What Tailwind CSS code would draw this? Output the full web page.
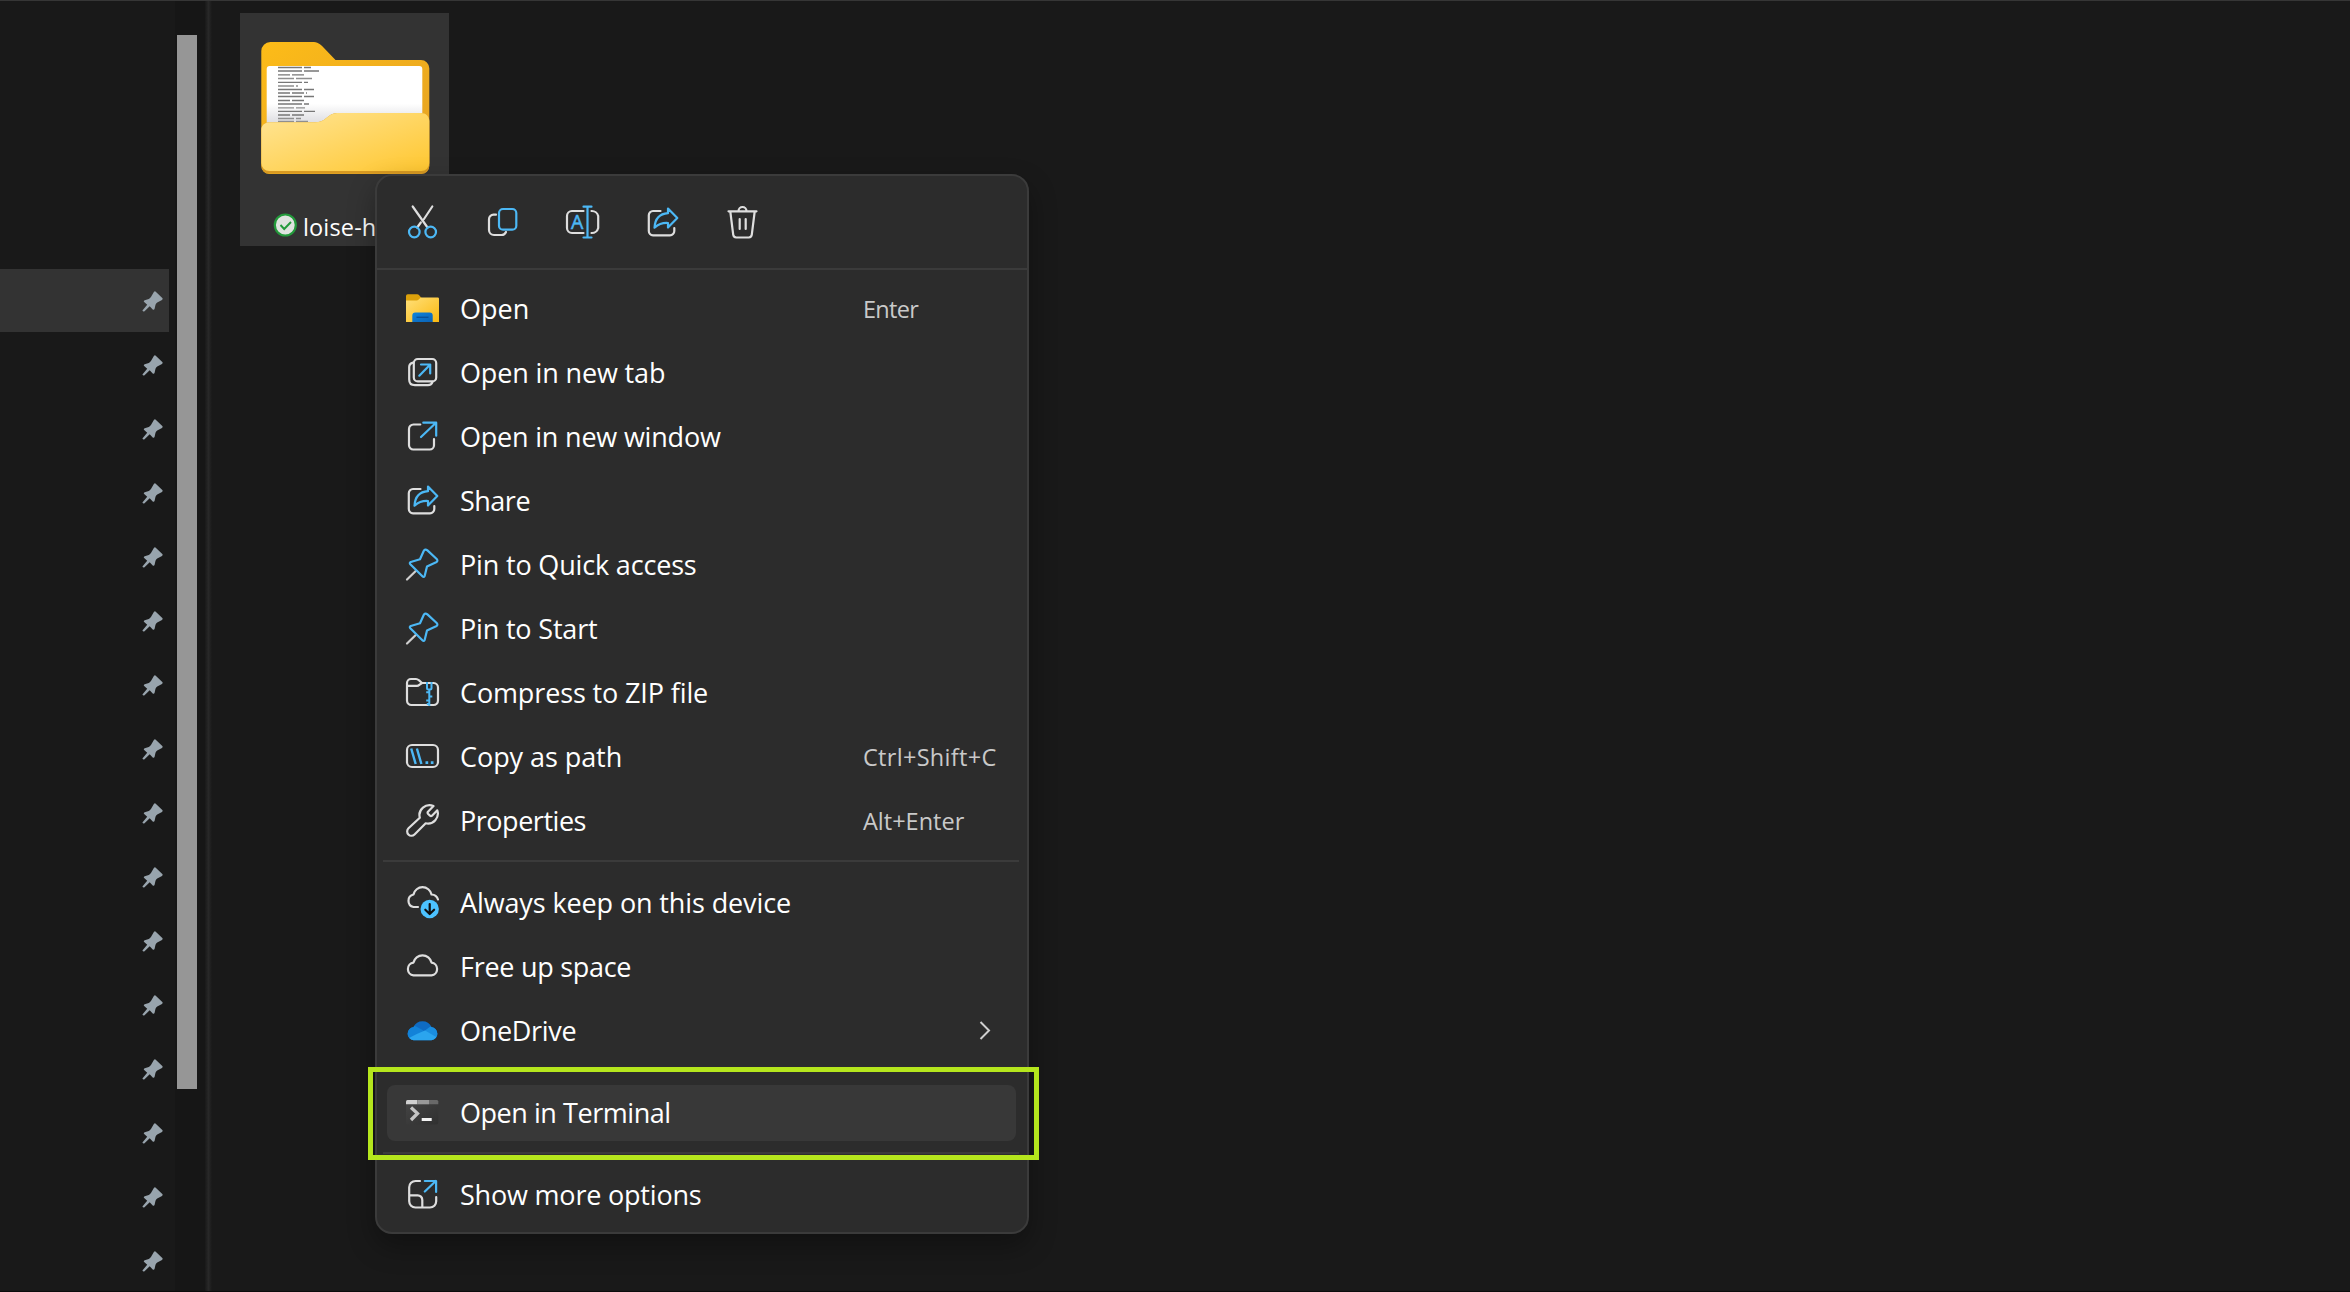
<!DOCTYPE html>
<html lang="en">
<head>
<meta charset="utf-8">
<title>File Explorer</title>
<script src="https://cdn.jsdelivr.net/npm/@tailwindcss/browser@4"></script>
</head>
<body class="h-[1292px] w-[2350px] overflow-hidden bg-[#191919] font-['Open_Sans',sans-serif] text-white">

<!-- Shared icon shapes -->
<svg class="hidden">
  <symbol id="pushpin" viewBox="0 0 22 22">
    <path d="M12 .8q1-.9 2 .1l6.300 6q.9 1.200-.3 2.100l-4.800 2.500q-1.200.8-1.700 2.300l-.9 4q-.6 1.600-1.900.600l-3-3.100-5.200 5q-1.300.7-2.100-.7l4.800-5.800-3-2.800q-1-1.100.500-1.700l4.100-1.400q1.400-.5 2.300-2.100z" fill="#98a4ad"/>
  </symbol>
  <symbol id="share" viewBox="0 0 36 36">
    <path d="M16.500 6H9a4.200 4.200 0 0 0-4.200 4.200V26A4.300 4.300 0 0 0 9 30.300h17a4.300 4.300 0 0 0 4.300-4.300v-3" stroke="#dedede"/>
    <path d="M24 3.500 33.300 13 24 22.500V18c-5.500-.4-9.500 1.200-13.500 4.700C11 14 16 8.800 24 8.200z" stroke="#4cb8f5"/>
  </symbol>
  <symbol id="pin" viewBox="0 0 36 36">
    <path d="M12 23.700 3 32.500" stroke="#cfcfcf"/>
    <path d="M16 12.200 19.700 4q1.400-2.500 3.700-.6l9.300 8.600q1.700 2-.6 3.300L23 19.600l-2.300 9.200q-.8 2-2.300.5L6.300 17.200q-1.200-1.400.5-2.200z" stroke="#4cb8f5"/>
  </symbol>
</svg>

<div class="flex h-full flex-col border-t border-[#363636]">
  <div class="flex min-h-0 flex-1">

    <!-- Navigation pane -->
    <nav class="flex w-[175px] shrink-0 flex-col pt-[235px]">
      <div class="mb-[33px] h-0.5 w-[155px] bg-[#353535]"></div>
      <div class="flex w-[169px] flex-col">
        <div class="flex h-[63px] items-center justify-end bg-[#333333] pt-[2px] pr-[5px]"><svg class="size-[22px]"><use href="#pushpin"/></svg></div>
        <div class="flex h-16 items-center justify-end pt-[3px] pr-[5px]"><svg class="size-[22px]"><use href="#pushpin"/></svg></div>
        <div class="flex h-16 items-center justify-end pt-[3px] pr-[5px]"><svg class="size-[22px]"><use href="#pushpin"/></svg></div>
        <div class="flex h-16 items-center justify-end pt-[3px] pr-[5px]"><svg class="size-[22px]"><use href="#pushpin"/></svg></div>
        <div class="flex h-16 items-center justify-end pt-[3px] pr-[5px]"><svg class="size-[22px]"><use href="#pushpin"/></svg></div>
        <div class="flex h-16 items-center justify-end pt-[3px] pr-[5px]"><svg class="size-[22px]"><use href="#pushpin"/></svg></div>
        <div class="flex h-16 items-center justify-end pt-[3px] pr-[5px]"><svg class="size-[22px]"><use href="#pushpin"/></svg></div>
        <div class="flex h-16 items-center justify-end pt-[3px] pr-[5px]"><svg class="size-[22px]"><use href="#pushpin"/></svg></div>
        <div class="flex h-16 items-center justify-end pt-[3px] pr-[5px]"><svg class="size-[22px]"><use href="#pushpin"/></svg></div>
        <div class="flex h-16 items-center justify-end pt-[3px] pr-[5px]"><svg class="size-[22px]"><use href="#pushpin"/></svg></div>
        <div class="flex h-16 items-center justify-end pt-[3px] pr-[5px]"><svg class="size-[22px]"><use href="#pushpin"/></svg></div>
        <div class="flex h-16 items-center justify-end pt-[3px] pr-[5px]"><svg class="size-[22px]"><use href="#pushpin"/></svg></div>
        <div class="flex h-16 items-center justify-end pt-[3px] pr-[5px]"><svg class="size-[22px]"><use href="#pushpin"/></svg></div>
        <div class="flex h-16 items-center justify-end pt-[3px] pr-[5px]"><svg class="size-[22px]"><use href="#pushpin"/></svg></div>
        <div class="flex h-16 items-center justify-end pt-[3px] pr-[5px]"><svg class="size-[22px]"><use href="#pushpin"/></svg></div>
        <div class="flex h-16 items-center justify-end pt-[3px] pr-[5px]"><svg class="size-[22px]"><use href="#pushpin"/></svg></div>
      </div>
    </nav>

    <!-- Scrollbar -->
    <div class="w-[30px] shrink-0 bg-[#161616] pt-[34px] pl-[2px]">
      <div class="h-[1054px] w-5 bg-[#969696]"></div>
    </div>
    <div class="w-[7px] shrink-0 bg-linear-to-r from-[#191919] via-[#282828] to-[#191919]"></div>

    <!-- File area -->
    <main class="flex-1 pt-[12px] pl-[28px]">
      <div class="flex h-[233px] w-[209px] flex-col bg-[#333333]">
        <svg class="mt-[23px] ml-[15px] h-[144px] w-[180px] shrink-0" viewBox="0 0 180 144">
          <defs>
            <linearGradient id="back" x1="0" y1="0" x2="1" y2="1"><stop offset="0" stop-color="#fdbc18"/><stop offset="1" stop-color="#e3a024"/></linearGradient>
            <linearGradient id="front" x1="0" y1="0" x2="1" y2="1"><stop offset="0" stop-color="#ffe596"/><stop offset="1" stop-color="#ffc730"/></linearGradient>
            <linearGradient id="paper" x1="0" y1="0" x2="0" y2="1"><stop offset=".65" stop-color="#fff"/><stop offset="1" stop-color="#dcdce0"/></linearGradient>
          </defs>
          <path d="M6.300 15a9 9 0 0 1 9-9H57c5.500 0 8.500 2 11.500 5.500L80.500 24H166a8.300 8.300 0 0 1 8.300 8.300V130a8 8 0 0 1-8 8h-152a8 8 0 0 1-8-8z" fill="url(#back)"/>
          <path d="M11.700 33a3 3 0 0 1 3-3h149.600a3 3 0 0 1 3 3v55H11.700z" fill="url(#paper)"/>
          <g stroke="#777" stroke-width="1.300">
            <path d="M23 31.500h33M23 35h41M23 46.300h30M23 53.500h36M23 60.500h36M23 68h31M23 75.300h37" stroke-dasharray="24 2 15 1"/>
            <path d="M23 38.800h27M23 57h29M23 64.500h26M23 79h27" stroke-dasharray="12 2"/>
            <path d="M23 42.500h34M23 50h20M23 71.800h27M23 82.500h23M23 85.500h30" stroke-dasharray="16 2" stroke="#8f8f8f"/>
          </g>
          <path d="M6.300 94c0-4 3-7.700 8-7.700H60c5 0 8-1.500 11-4 3.500-3 6.500-5.300 11-5.300h84c5 0 8.300 3.500 8.300 8v44.500a8 8 0 0 1-8 8h-152a8 8 0 0 1-8-8z" fill="#d89a22"/>
          <path d="M6.300 94c0-4 3-7.700 8-7.700H60c5 0 8-1.500 11-4 3.500-3 6.500-5.300 11-5.300h84c5 0 8.300 3.500 8.300 8v42a8 8 0 0 1-8 8h-152a8 8 0 0 1-8-8z" fill="url(#front)"/>
        </svg>
        <div class="mt-[27px] ml-[33px] flex items-center">
          <svg class="size-6" viewBox="0 0 24 24"><circle cx="12.300" cy="12" r="10.500" fill="#dfe3df" stroke="#239a3b" stroke-width="2.200"/><path d="m7.500 12 3.700 4 6.800-7" fill="none" stroke="#239a3b" stroke-width="1.900"/></svg>
          <span class="mt-1 ml-[6px] text-[23.500px] leading-8 tracking-[0.15px] whitespace-nowrap">loise-h</span>
        </div>
      </div>
    </main>
  </div>
  <div class="h-px bg-[#0c0c0c]"></div>
</div>

<!-- Context menu -->
<div class="absolute top-[174px] left-[375px] h-[1060px] w-[654px] rounded-[17px] border-2 border-[#3b3b3b] bg-[#2c2c2c] shadow-[0_12px_28px_rgba(0,0,0,0.32)]">
  <div class="flex h-[92px] items-center gap-11 pl-[27px]">
    <svg class="size-9" viewBox="0 0 36 36" fill="none" stroke-width="2.200" stroke-linecap="round"><path d="m8.700 2.500 14.800 21M28.300 2.500 20 15M16.800 18.500l-3.600 5" stroke="#dedede"/><circle cx="10.300" cy="28" r="5.300" stroke="#4cb8f5"/><circle cx="26.700" cy="28" r="5.300" stroke="#4cb8f5"/></svg>
    <svg class="size-9" viewBox="0 0 36 36" fill="none" stroke-width="2.200" stroke-linecap="round"><path d="M12 10.700H9.500A4.500 4.500 0 0 0 5 15.200V26a5 5 0 0 0 5 5h7.500a5 5 0 0 0 4.500-3" stroke="#dedede"/><rect x="15" y="5" width="17.300" height="20.700" rx="4" stroke="#4cb8f5"/></svg>
    <svg class="size-9" viewBox="0 0 36 36" fill="none" stroke-width="2.200" stroke-linecap="round"><path d="M19.500 7H8a5 5 0 0 0-5 5v12a5 5 0 0 0 5 5h11.500M27.500 7a6.500 6.500 0 0 1 6.700 5v12a6.500 6.500 0 0 1-6.700 5" stroke="#dedede"/><path d="M23.500 3v30.500M19.500 2.700h8M19.500 33.500h8" stroke="#4cb8f5"/><text x="7" y="24.500" textLength="13" font-size="19.500" fill="#4cb8f5" stroke="#4cb8f5" stroke-width=".5">A</text></svg>
    <svg class="size-9 translate-y-px" fill="none" stroke-width="2.200" stroke-linecap="round" stroke-linejoin="round"><use href="#share"/></svg>
    <svg class="size-9" viewBox="0 0 36 36" fill="none" stroke="#dedede" stroke-width="2.200" stroke-linecap="round" stroke-linejoin="round"><path d="M4.500 7.300h28M14.500 7a4 4 0 0 1 8 0M6.300 7.500l2.900 23.200a3.200 3.200 0 0 0 3 2.800h12.600a3.200 3.200 0 0 0 3-2.800l2.900-23.200M15.700 15v10M21.700 15v10"/></svg>
  </div>
  <div class="mb-[7px] h-0.5 bg-[#3b3b3b]"></div>

  <ul class="text-[27px] leading-9 whitespace-nowrap">
    <li class="flex h-16 items-center pl-[27px]">
      <svg class="mr-5 size-9" viewBox="0 0 36 36"><defs><linearGradient id="fy" x1="0" y1="0" x2="1" y2="1"><stop offset="0" stop-color="#ffe07a"/><stop offset="1" stop-color="#fbb910"/></linearGradient><linearGradient id="fb" x1="0" y1="0" x2="1" y2="1"><stop offset="0" stop-color="#0f84db"/><stop offset="1" stop-color="#0b62b5"/></linearGradient></defs><path d="M2 5a1.700 1.700 0 0 1 1.700-1.700h9.500q1.200 0 2 1L17.500 7v5H2z" fill="#dca10b"/><path d="M2 9.500h10.500q1.300 0 2.200-.9L16.800 6.500h17q1.200 0 1.200 1.200V31H2z" fill="url(#fy)"/><path d="M8.300 31v-6.500a3 3 0 0 1 3-3h14.400a3 3 0 0 1 3 3V31z" fill="url(#fb)"/><path d="M12.500 26.300h12" stroke="#0a4f96" stroke-width="1.300"/></svg>
      <span class="w-[403px] tracking-[0.05px]">Open</span><span class="text-[23.500px] tracking-[-0.7px] text-[#c9c9c9]">Enter</span>
    </li>
    <li class="flex h-16 items-center pl-[27px]">
      <svg class="mr-5 size-9" viewBox="0 0 36 36" fill="none" stroke-width="2.200" stroke-linecap="round" stroke-linejoin="round"><rect x="9.800" y="4" width="22.400" height="22.400" rx="4" stroke="#dedede"/><path d="M9 7.600Q5.200 8.500 5.200 12v12.500q0 5.700 5.700 5.700H24q3.500 0 4.500-3.300" stroke="#dedede"/><path d="m15.300 20.700 10.700-11M17 9.500h9.200v9" stroke="#4cb8f5"/></svg>
      <span class="tracking-[-0.14px]">Open in new tab</span>
    </li>
    <li class="flex h-16 items-center pl-[27px]">
      <svg class="mr-5 size-9" viewBox="0 0 36 36" fill="none" stroke-width="2.200" stroke-linecap="round" stroke-linejoin="round"><path d="M16.300 5.500H9.500A4.500 4.500 0 0 0 5 10v16.200a4.300 4.300 0 0 0 4.300 4.300h16.400a4.300 4.300 0 0 0 4.300-4.300V20" stroke="#dedede"/><path d="M17 18 32 3.700M19.300 3.700h12.900v13" stroke="#4cb8f5"/></svg>
      <span class="tracking-[-0.2px]">Open in new window</span>
    </li>
    <li class="flex h-16 items-center pl-[27px]">
      <svg class="mr-5 size-9" fill="none" stroke-width="2.200" stroke-linecap="round" stroke-linejoin="round"><use href="#share"/></svg>
      <span class="tracking-[-0.5px]">Share</span>
    </li>
    <li class="flex h-16 items-center pl-[27px]">
      <svg class="mr-5 size-9" fill="none" stroke-width="2.200" stroke-linecap="round" stroke-linejoin="round"><use href="#pin"/></svg>
      <span class="tracking-[-0.17px]">Pin to Quick access</span>
    </li>
    <li class="flex h-16 items-center pl-[27px]">
      <svg class="mr-5 size-9" fill="none" stroke-width="2.200" stroke-linecap="round" stroke-linejoin="round"><use href="#pin"/></svg>
      <span class="tracking-[-0.18px]">Pin to Start</span>
    </li>
    <li class="flex h-16 items-center pl-[27px]">
      <svg class="mr-5 size-9" viewBox="0 0 36 36" fill="none" stroke-width="2.200" stroke-linejoin="round"><path d="M3 8a4 4 0 0 1 4-4h5q1.600 0 2.800 1.200L18 8H29.700A4.500 4.500 0 0 1 34 12.500v13a4.500 4.500 0 0 1-4.500 4.500H7.500A4.500 4.500 0 0 1 3 25.500zM3 10.800h10q1.300 0 2.300-.9L18 8" stroke="#dedede"/><path d="M23 7V13q0 1.500 1.500 1.500H26q1.500 0 1.500-1.500V7M25.300 14.500V31M25.300 17.300H22.200M25.300 21.500h3M25.300 25.500H22.200M25.300 29H22.800" stroke="#4cb8f5" stroke-width="2"/></svg>
      <span class="tracking-[-0.13px]">Compress to ZIP file</span>
    </li>
    <li class="flex h-16 items-center pl-[27px]">
      <svg class="mr-5 size-9" viewBox="0 0 36 36" fill="none" stroke-width="2.200"><rect x="3" y="6" width="31" height="22" rx="5" stroke="#dedede"/><path d="m7.200 9.500 4.500 15.500M12.900 9.500l4.500 15.500" stroke="#4cb8f5" stroke-width="2.400"/><path d="M21.500 23.600h2.700M26.800 23.600h2.700" stroke="#4cb8f5" stroke-width="2.700"/></svg>
      <span class="w-[403px] tracking-[-0.06px]">Copy as path</span><span class="text-[23.500px] tracking-[0.3px] text-[#c9c9c9]">Ctrl+Shift+C</span>
    </li>
    <li class="flex h-16 items-center pl-[27px]">
      <svg class="mr-5 size-9" viewBox="0 0 36 36" fill="none" stroke="#dedede" stroke-width="2.200" stroke-linejoin="round"><path d="M29.500 3A10 10 0 0 0 15.800 14.700L4.500 25.300a4.300 4.300 0 0 0 6 6.200L21.700 20.300A10 10 0 0 0 33.300 7.300L28 12.700q-1 .8-2 0l-2-2q-.8-1 0-2z"/></svg>
      <span class="w-[403px] tracking-[-0.47px]">Properties</span><span class="text-[23.500px] text-[#c9c9c9]">Alt+Enter</span>
    </li>
    <li class="mr-[8px] ml-[6px] mt-[7px] mb-[9px] h-0.5 bg-[#3b3b3b]"></li>
    <li class="flex h-16 items-center pl-[27px]">
      <svg class="mr-5 size-9" viewBox="0 0 36 36" fill="none" stroke-width="2.200" stroke-linecap="round" stroke-linejoin="round"><path d="M14 22H9.500A6.400 6.400 0 0 1 9.500 9.500 9.200 9.200 0 0 1 27.500 9.500Q32.500 9.700 34 14.500" stroke="#dedede"/><circle cx="25.700" cy="24" r="9.200" fill="#4cc2ff"/><path d="M25.700 19v9.800M21.300 24.700l4.400 4.300 4.400-4.300" stroke="#101010"/></svg>
      <span class="tracking-[-0.115px]">Always keep on this device</span>
    </li>
    <li class="flex h-16 items-center pl-[27px]">
      <svg class="mr-5 size-9" viewBox="0 0 36 36" fill="none" stroke="#dedede" stroke-width="2.200" stroke-linejoin="round"><path d="M9.500 26.300A6.400 6.400 0 0 1 9.500 13.600 9.200 9.200 0 0 1 27.500 13.600 6.400 6.400 0 0 1 27.500 26.300z"/></svg>
      <span class="tracking-[-0.28px]">Free up space</span>
    </li>
    <li class="flex h-16 items-center pl-[27px]">
      <svg class="mr-5 size-9" viewBox="0 0 36 36"><defs><clipPath id="cl"><path d="M9.500 27.300A6.700 6.700 0 0 1 9.500 14 10 10 0 0 1 27.500 14 6.700 6.700 0 0 1 27.500 27.300z"/></clipPath></defs><g clip-path="url(#cl)"><path d="M0 4h36v26H0z" fill="#0f6cc4"/><path d="M0 12.500Q9 10.500 14 14.500L22 19 4 30H0z" fill="#1282d8"/><path d="m20 18.300 6-4.500 12-1v15z" fill="#1a8ee0"/><path d="M2 26.500Q11 21.500 21 17.600L36 26v4H2z" fill="#2ba5ee"/></g></svg>
      <span class="tracking-[-0.3px]">OneDrive</span>
      <svg class="mr-[36px] ml-auto h-5 w-3" viewBox="0 0 12 20" fill="none" stroke="#cfcfcf" stroke-width="2"><path d="m1.500 1 8.500 8.500L1.500 18"/></svg>
    </li>
    <li class="mr-[8px] ml-[6px] mt-[7px] mb-[9px] h-0.5 bg-[#3b3b3b]"></li>
    <li class="flex h-16 items-center pr-[11px] pb-px pl-[10px]">
      <div class="flex h-14 w-full items-center rounded-lg bg-[#383838] pt-px pl-[17px]">
        <svg class="mr-5 size-9" viewBox="0 0 36 36" fill="none"><defs><linearGradient id="tm" x1="0" y1="0" x2="1" y2="1"><stop offset="0" stop-color="#444"/><stop offset="1" stop-color="#303030"/></linearGradient></defs><path d="M2 6h32.300v21.500a2 2 0 0 1-2 2H4a2 2 0 0 1-2-2z" fill="url(#tm)"/><path d="M2 9.300V6.500A1.500 1.500 0 0 1 3.500 5h9.800v4.300z" fill="#d0d0d0"/><path d="M13.300 5H25v4.300H13.300z" fill="#999"/><path d="M25 5h7.800a1.500 1.500 0 0 1 1.500 1.500v2.800H25z" fill="#696969"/><path d="m7 12.500 6.500 6-6.500 6.500" stroke="#c4c4c4" stroke-width="3.300"/><path d="M17.700 24.500h10" stroke="#f3f3f3" stroke-width="3"/></svg>
        <span class="tracking-[-0.45px]">Open in Terminal</span>
      </div>
    </li>
    <li class="mr-[8px] ml-[6px] mt-[7px] mb-[9px] h-0.5 bg-[#3b3b3b]"></li>
    <li class="flex h-16 items-center pl-[27px]">
      <svg class="mr-5 size-9" viewBox="0 0 36 36" fill="none" stroke-width="2.200" stroke-linecap="round" stroke-linejoin="round"><path d="M16 4h-4.500A6.300 6.300 0 0 0 5.200 10.300v14A6.200 6.200 0 0 0 11.400 30.500H26a6.200 6.200 0 0 0 6.200-6.200V20M5.300 18.300h8.400a4.600 4.600 0 0 1 4.600 4.600v7.500" stroke="#dedede"/><path d="M20.800 14.500 31.800 4M20.800 4h11.300v11" stroke="#4cb8f5"/></svg>
      <span class="tracking-[-0.2px]">Show more options</span>
    </li>
  </ul>
</div>

<!-- Highlight frame -->
<div class="absolute top-[1067px] left-[368px] h-[93px] w-[671px] border-[5px] border-[#b5e61d]"></div>
</body>
</html>
